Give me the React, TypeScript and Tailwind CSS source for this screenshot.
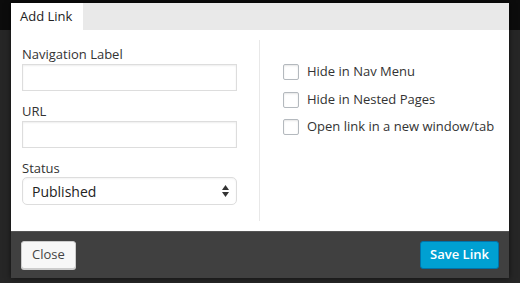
import React from 'react';

const FONT = "font-['Open_Sans',_'Liberation_Sans',_sans-serif]";

const Field: React.FC<{ label: string }> = ({ label }) => (
  <div className="flex flex-col">
    <label className="text-[13px] leading-[16px] text-[#333] mb-[2px]">{label}</label>
    <input
      type="text"
      className="h-[27px] w-[215px] border border-[#ddd] bg-white shadow-[inset_0_1px_2px_rgba(0,0,0,0.07)] outline-none"
    />
  </div>
);

const Check: React.FC<{ label: string }> = ({ label }) => (
  <label className="flex items-center gap-[8px] h-[16px] text-[13px] text-[#333]">
    <span className="w-[16px] h-[16px] border border-[#b4b9be] rounded-[2px] bg-white shadow-[inset_0_1px_2px_rgba(0,0,0,0.1)]" />
    {label}
  </label>
);

export default function App() {
  return (
    <div
      className={`${FONT} w-[520px] h-[283px] overflow-hidden pl-[11px] pr-[11px] pt-[3px] bg-[linear-gradient(to_bottom,#0c0c0c_30px,#262626_30px)]`}
    >
      <div className="w-[498px] flex flex-col shadow-[0_0_6px_rgba(0,0,0,0.6)]">
        {/* tabs */}
        <div className="h-[27px] bg-[#e9e9e9] flex">
          <div className="w-[72px] bg-white pl-[9px] text-[13px] leading-[27px] text-[#222]">Add Link</div>
        </div>

        {/* body */}
        <div className="h-[201px] bg-white flex py-[10px]">
          <div className="w-[249px] pl-[11px] pt-[6px] flex flex-col gap-[12px] border-r border-[#e8e8e8]">
            <Field label="Navigation Label" />
            <Field label="URL" />
            <div className="flex flex-col">
              <label className="text-[13px] leading-[16px] text-[#333] mb-[1px]">Status</label>
              <div className="h-[28px] w-[215px] border border-[#ddd] rounded-[5px] bg-white flex items-center justify-between pl-[9px] pr-[7px] shadow-[inset_0_1px_2px_rgba(0,0,0,0.05)]">
                <span className="text-[14px] text-[#222]">Published</span>
                <svg width="7" height="12" viewBox="0 0 7 12">
                  <path d="M3.5 0 L7 5 L0 5 Z" fill="#333" />
                  <path d="M0 7 L7 7 L3.5 12 Z" fill="#333" />
                </svg>
              </div>
            </div>
          </div>
          <div className="flex-1 pl-[23px] pt-[24px] flex flex-col gap-[11.5px]">
            <Check label="Hide in Nav Menu" />
            <Check label="Hide in Nested Pages" />
            <Check label="Open link in a new window/tab" />
          </div>
        </div>

        {/* footer */}
        <div className="h-[47px] bg-[#404040] border-t border-[#555] flex items-center justify-between px-[10px]">
          <button className="h-[28px] px-[10px] bg-[#f7f7f7] border border-[#ccc] rounded-[3px] text-[13px] text-[#444] shadow-[0_1px_0_#ccc]">
            Close
          </button>
          <button className="h-[28px] px-[9px] bg-[#00a0d2] border border-[#0073aa] rounded-[3px] text-[13px] font-semibold text-white">
            Save Link
          </button>
        </div>
      </div>
    </div>
  );
}
